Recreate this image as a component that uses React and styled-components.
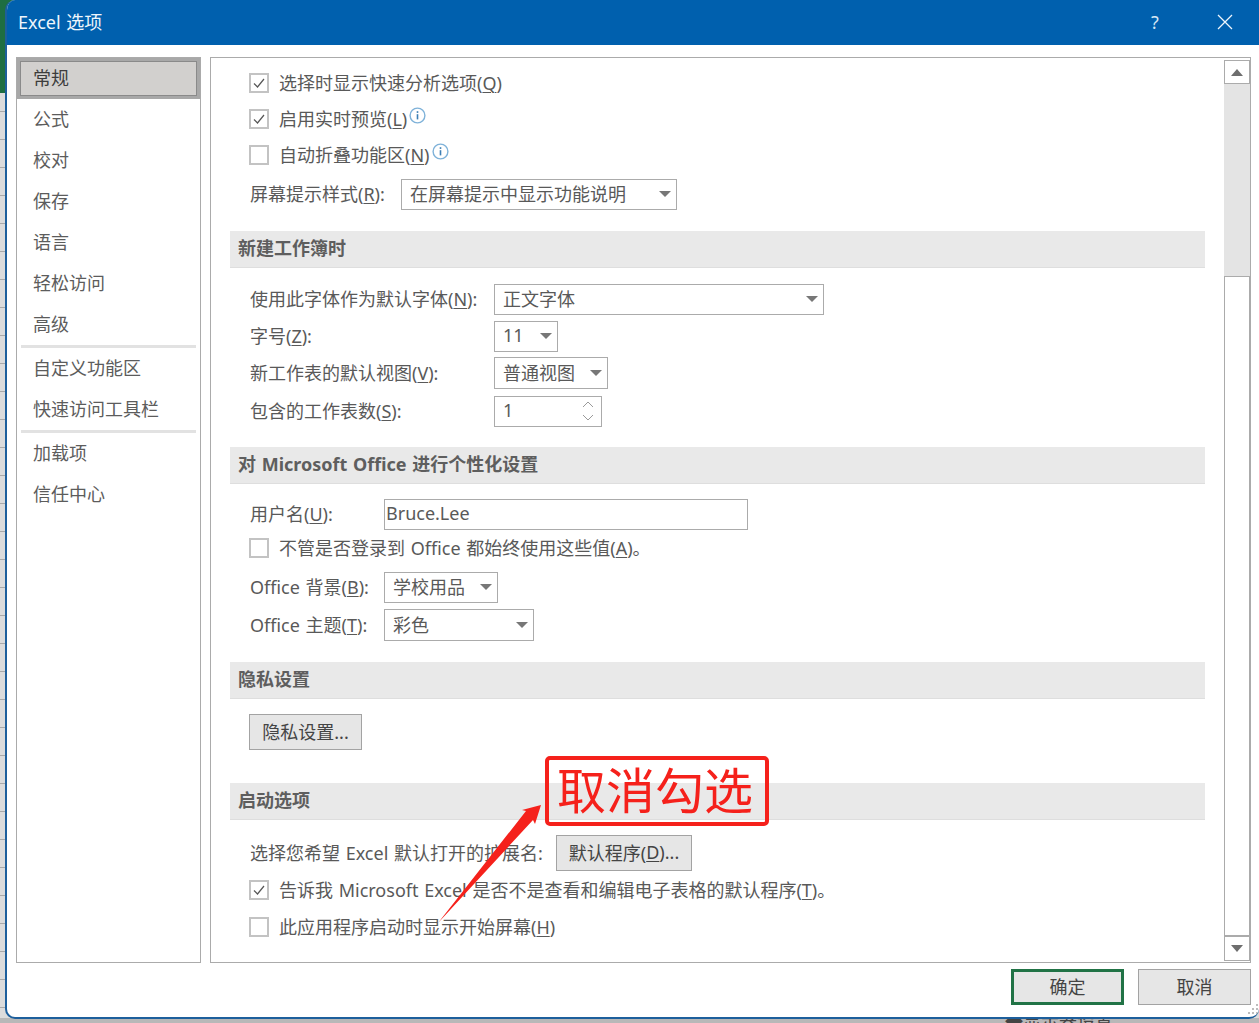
import React from 'react';
import styled, { createGlobalStyle } from 'styled-components';

const Global = createGlobalStyle`
  html, body { margin: 0; padding: 0; background: #fff; }
  * { box-sizing: border-box; }
`;

const Page = styled.div`
  position: relative;
  width: 1259px;
  height: 1023px;
  overflow: hidden;
  padding-left: 5px;
  font-family: "Noto Sans", "Noto Sans CJK SC", sans-serif;
  font-size: 18px;
  word-spacing: 1px;
  color: #595959;
  background:
    linear-gradient(#1e6e42 0 93px, transparent 93px),
    linear-gradient(transparent 1018px, #b8b8b8 1018px),
    repeating-linear-gradient(#dcdcdc 0 27px, #a9a9a9 27px 28px);
`;

const StatusText = styled.div`
  position: absolute;
  left: 1005px;
  top: 1007px;
  color: #444;
  white-space: nowrap;
`;

const Dialog = styled.div`
  position: relative;
  width: 1254px;
  height: 1019px;
  display: flex;
  flex-direction: column;
  background: #fff;
  border-bottom: 2px solid #1d5f9c;
  border-left: 2px solid #1d5f9c;
  border-radius: 10px 0 10px 10px;
  overflow: hidden;
`;

const TitleBar = styled.div`
  flex: none;
  height: 45px;
  margin-left: -2px;
  padding: 0 26px 0 13px;
  display: flex;
  align-items: center;
  background: #0060ae;
  color: #eef6fc;
`;

const Title = styled.div`
  flex: 1;
  padding-bottom: 4px;
`;

const Help = styled.div`
  width: 66px;
  padding-bottom: 2px;
  color: #d5e6f4;
`;

const CloseIcon = styled.svg`
  margin-bottom: 2px;
`;

const Body = styled.div`
  flex: none;
  height: 906px;
  margin: 12px 0 0 9px;
  display: flex;
  gap: 9px;
`;

const Sidebar = styled.div`
  width: 185px;
  border: 1px solid #ababab;
  display: flex;
  flex-direction: column;
`;

const NavItem = styled.div`
  height: 41px;
  padding: 0 0 3px 16px;
  display: flex;
  align-items: center;
  flex: none;
  color: ${p => (p.$active ? '#3c3c3c' : '#5c5c5c')};
  background: ${p => (p.$active ? '#d2d0ce' : 'transparent')};
  ${p => p.$active && 'box-shadow: inset 0 0 0 3px #a8a8a8, inset 0 0 0 4px #8a8a8a;'}
`;

const NavRule = styled.div`
  height: 3px;
  flex: none;
  margin: 0 4px;
  background: #e2e2e2;
`;

const Panel = styled.div`
  width: 1041px;
  border: 1px solid #ababab;
  display: flex;
`;

const Content = styled.div`
  flex: 1;
  min-width: 0;
  padding-top: 7px;
`;

const Row = styled.div`
  height: ${p => p.$h || 36}px;
  margin-top: ${p => p.$mt || 0}px;
  padding-left: 39px;
  display: flex;
  align-items: center;
  white-space: nowrap;
`;

const Check = styled.span`
  width: 20px;
  height: 20px;
  flex: none;
  margin: 0 10px 0 -1px;
  display: inline-flex;
  align-items: center;
  justify-content: center;
  border: 2px solid #c3c3c3;
`;

const Label = styled.span`
  flex: none;
  padding-bottom: 2px;
  width: ${p => (p.$w ? `${p.$w}px` : 'auto')};
`;

const Key = styled.u`
  text-underline-offset: 2px;
  text-decoration-thickness: 1px;
`;

const SectionHead = styled.div`
  height: 37px;
  margin: ${p => p.$mt}px 19px 0 19px;
  padding: 0 0 4px 8px;
  display: flex;
  align-items: center;
  width: 975px;
  background: #e9e9e9;
  border-bottom: 1px solid #dedede;
  font-weight: 700;
  color: #5e5e5e;
`;

const Field = styled.div`
  position: relative;
  width: ${p => p.$w}px;
  height: ${p => p.$h || 31}px;
  flex: none;
  padding: 0 0 2px ${p => p.$pl || 8}px;
  display: flex;
  align-items: center;
  border: 1px solid #ababab;
  background: #fff;
`;

const Caret = styled.span`
  position: absolute;
  right: 5px;
  top: 50%;
  margin-top: -3px;
  width: 0;
  height: 0;
  border-left: 6px solid transparent;
  border-right: 6px solid transparent;
  border-top: 6px solid #777;
`;

const Spinner = styled.svg`
  position: absolute;
  right: 6px;
  top: 3px;
`;

const Button = styled.div`
  width: ${p => p.$w}px;
  height: 36px;
  flex: none;
  margin-left: ${p => p.$ml || 0}px;
  padding-bottom: 2px;
  display: flex;
  align-items: center;
  justify-content: center;
  background: #e6e6e6;
  border: ${p => (p.$primary ? '3px solid #217346' : '1px solid #a3a3a3')};
  color: #444;
`;

const ScrollBar = styled.div`
  width: 26px;
  flex: none;
  margin: 2px 0 1px;
  display: flex;
  flex-direction: column;
  background: #e4e4e4;
`;

const ScrollBtn = styled.div`
  height: ${p => p.$h}px;
  flex: ${p => (p.$grow ? 1 : 'none')};
  margin-top: ${p => p.$mt || 0}px;
  display: flex;
  align-items: center;
  justify-content: center;
  background: #fff;
  border: 1px solid #ababab;
`;

const ArrowUp = styled.span`
  border-left: 6px solid transparent;
  border-right: 6px solid transparent;
  border-bottom: 7px solid #6e6e6e;
`;

const ArrowDown = styled.span`
  border-left: 6px solid transparent;
  border-right: 6px solid transparent;
  border-top: 7px solid #6e6e6e;
`;

const Footer = styled.div`
  margin-top: 6px;
  padding-right: 8px;
  display: flex;
  justify-content: flex-end;
  gap: 14px;
`;

const Grip = styled.svg`
  position: absolute;
  right: 0;
  bottom: 3px;
`;

const Callout = styled.div`
  position: absolute;
  left: 545px;
  top: 756px;
  width: 224px;
  height: 70px;
  padding: 0 4px 2px 0;
  display: flex;
  align-items: center;
  justify-content: center;
  border: 4px solid #f5211b;
  border-radius: 5px;
  color: #f5211b;
  font-size: 49px;
  line-height: 1;
  word-spacing: 0;
`;

const ArrowOverlay = styled.svg`
  position: absolute;
  left: 430px;
  top: 795px;
`;

const InfoIcon = styled.svg`
  margin: -8px 0 0 2px;
`;

const Tick = () => (
  <svg width="14" height="12" viewBox="0 0 14 12">
    <path d="M2 6.5 L5.5 10 L12 2" fill="none" stroke="#555" strokeWidth="1.2" />
  </svg>
);

const Info = () => (
  <InfoIcon width="17" height="17" viewBox="0 0 17 17">
    <circle cx="8.5" cy="8.5" r="7.4" fill="#fff" stroke="#7fb2d9" strokeWidth="1.4" />
    <rect x="7.7" y="7.2" width="1.6" height="5.2" fill="#3c7fb5" />
    <rect x="7.7" y="4.2" width="1.6" height="1.7" fill="#3c7fb5" />
  </InfoIcon>
);

const navTop = ['公式', '校对', '保存', '语言', '轻松访问', '高级'];

export default function App() {
  return (
    <Page>
      <Global />
      <StatusText>◆显示器设置</StatusText>
      <Dialog>
        <TitleBar>
          <Title>Excel 选项</Title>
          <Help>?</Help>
          <CloseIcon width="16" height="16" viewBox="0 0 16 16">
            <path d="M1 1 L15 15 M15 1 L1 15" stroke="#eef6fc" strokeWidth="1.3" />
          </CloseIcon>
        </TitleBar>
        <Body>
          <Sidebar>
            <NavItem $active>常规</NavItem>
            {navTop.map(n => <NavItem key={n}>{n}</NavItem>)}
            <NavRule />
            <NavItem>自定义功能区</NavItem>
            <NavItem>快速访问工具栏</NavItem>
            <NavRule />
            <NavItem>加载项</NavItem>
            <NavItem>信任中心</NavItem>
          </Sidebar>
          <Panel>
            <Content>
              <Row><Check><Tick /></Check><Label>选择时显示快速分析选项(<Key>Q</Key>)</Label></Row>
              <Row><Check><Tick /></Check><Label>启用实时预览(<Key>L</Key>)</Label><Info /></Row>
              <Row><Check /><Label>自动折叠功能区(<Key>N</Key>)</Label><Info /></Row>
              <Row $h={42}>
                <Label $w={151}>屏幕提示样式(<Key>R</Key>):</Label>
                <Field $w={276}>在屏幕提示中显示功能说明<Caret /></Field>
              </Row>

              <SectionHead $mt={16}>新建工作簿时</SectionHead>
              <Row $mt={13}>
                <Label $w={244}>使用此字体作为默认字体(<Key>N</Key>):</Label>
                <Field $w={330}>正文字体<Caret /></Field>
              </Row>
              <Row $mt={1}>
                <Label $w={244}>字号(<Key>Z</Key>):</Label>
                <Field $w={64}>11<Caret /></Field>
              </Row>
              <Row $mt={1}>
                <Label $w={244}>新工作表的默认视图(<Key>V</Key>):</Label>
                <Field $w={114} $h={32}>普通视图<Caret /></Field>
              </Row>
              <Row $mt={2}>
                <Label $w={244}>包含的工作表数(<Key>S</Key>):</Label>
                <Field $w={108}>
                  1
                  <Spinner width="14" height="24" viewBox="0 0 14 24">
                    <path d="M2 7 L7 2 L12 7 M2 15 L7 20 L12 15" fill="none" stroke="#9a9a9a" strokeWidth="1" />
                  </Spinner>
                </Field>
              </Row>

              <SectionHead $mt={18}>对 Microsoft Office 进行个性化设置</SectionHead>
              <Row $mt={12}>
                <Label $w={134}>用户名(<Key>U</Key>):</Label>
                <Field $w={364} $pl={1}>Bruce.Lee</Field>
              </Row>
              <Row $h={32}><Check /><Label>不管是否登录到 Office 都始终使用这些值(<Key>A</Key>)。</Label></Row>
              <Row $mt={5}>
                <Label $w={134}>Office 背景(<Key>B</Key>):</Label>
                <Field $w={114}>学校用品<Caret /></Field>
              </Row>
              <Row $mt={2}>
                <Label $w={134}>Office 主题(<Key>T</Key>):</Label>
                <Field $w={150} $h={32}>彩色<Caret /></Field>
              </Row>

              <SectionHead $mt={19}>隐私设置</SectionHead>
              <Row $mt={15}><Button $w={113} $ml={-1}>隐私设置...</Button></Row>

              <SectionHead $mt={33}>启动选项</SectionHead>
              <Row $mt={15}>
                <Label $w={306}>选择您希望 Excel 默认打开的扩展名:</Label>
                <Button $w={136}>默认程序(<Key>D</Key>)...</Button>
              </Row>
              <Row $mt={1}><Check><Tick /></Check><Label>告诉我 Microsoft Excel 是否不是查看和编辑电子表格的默认程序(<Key>T</Key>)。</Label></Row>
              <Row $mt={1}><Check /><Label>此应用程序启动时显示开始屏幕(<Key>H</Key>)</Label></Row>
            </Content>
            <ScrollBar>
              <ScrollBtn $h={24}><ArrowUp /></ScrollBtn>
              <ScrollBtn $h={660} $mt={192} $grow />
              <ScrollBtn $h={25}><ArrowDown /></ScrollBtn>
            </ScrollBar>
          </Panel>
        </Body>
        <Footer>
          <Button $w={113} $primary>确定</Button>
          <Button $w={113}>取消</Button>
        </Footer>
        <Grip width="12" height="10" viewBox="0 0 12 10">
          <path d="M9 0h2v2H9zM5 4h2v2H5zM9 4h2v2H9zM1 8h2v2H1zM5 8h2v2H5zM9 8h2v2H9z" fill="#bdbdbd" />
        </Grip>
      </Dialog>
      <Callout>取消勾选</Callout>
      <ArrowOverlay width="120" height="140" viewBox="0 0 120 140">
        <polygon points="8,128 96,16 92,15 111,10 105,29 103,25" fill="#f5211b" />
      </ArrowOverlay>
    </Page>
  );
}
